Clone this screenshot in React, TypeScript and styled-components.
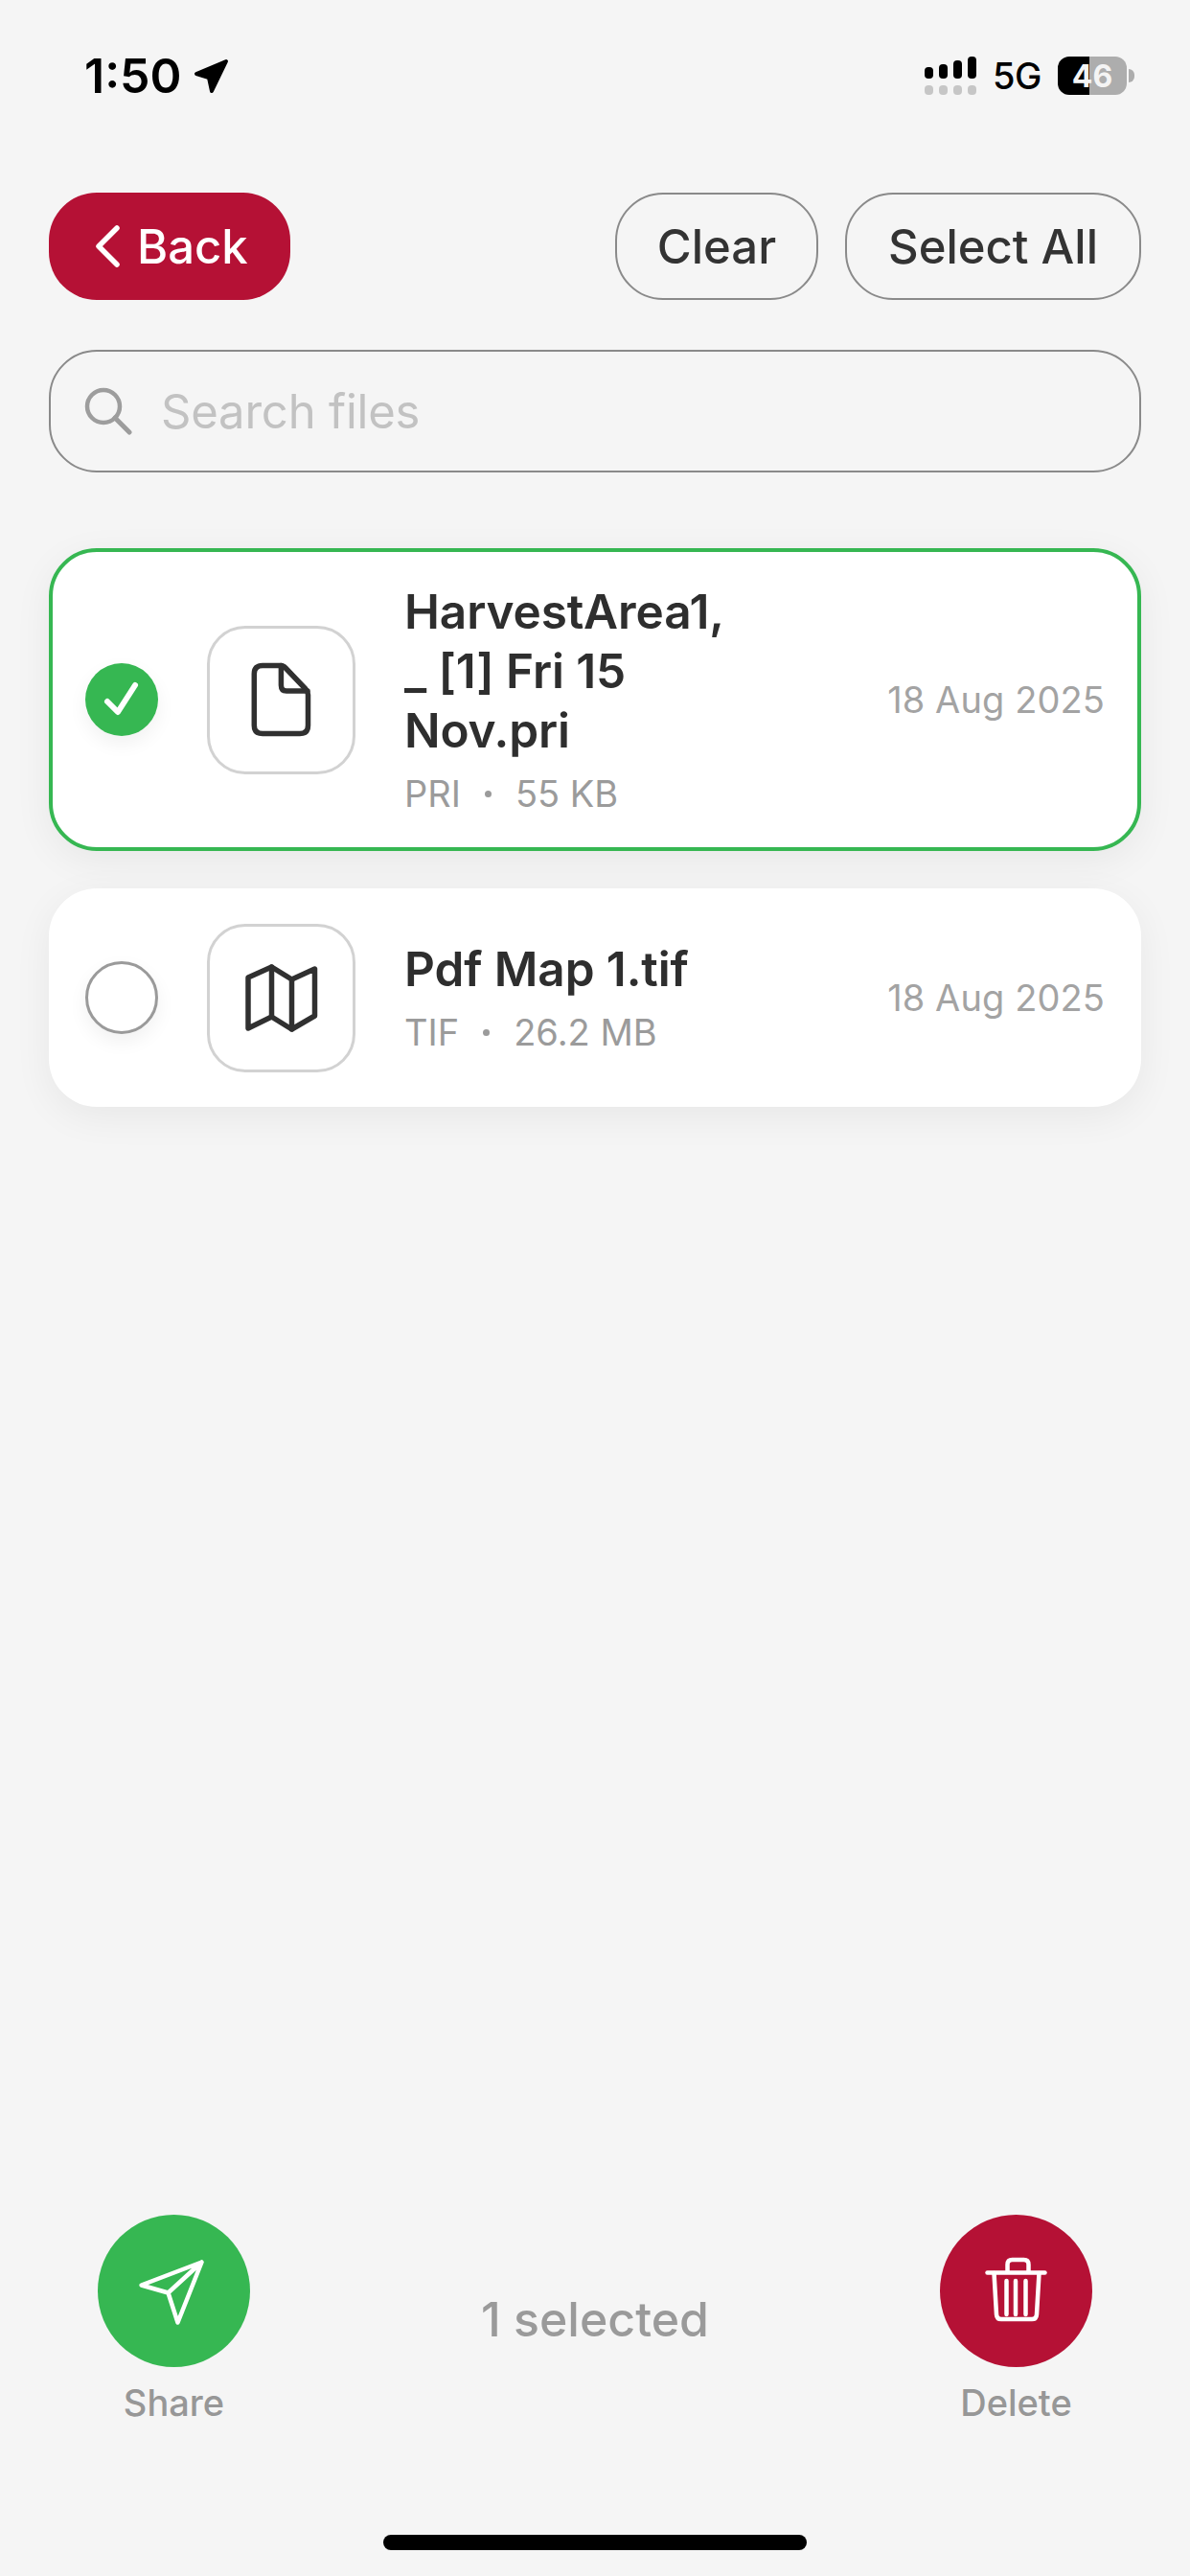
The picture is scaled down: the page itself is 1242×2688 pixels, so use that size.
import React from "react";
import styled, { createGlobalStyle } from "styled-components";

const Global = createGlobalStyle`
  html, body { margin: 0; padding: 0; background: #f5f5f5; }
  * { box-sizing: border-box; }
  body { font-family: Inter, "Noto Sans", "Liberation Sans", sans-serif; }
`;

const RED = "#b51135";
const GREEN = "#36b752";

const Screen = styled.div`
  width: 1242px;
  height: 2688px;
  overflow: hidden;
  background: #f5f5f5;
  display: flex;
  flex-direction: column;
`;

const StatusBar = styled.div`
  height: 58px;
  margin-top: 50px;
  padding: 0 58px 0 88px;
  display: flex;
  align-items: center;
  justify-content: space-between;
`;
const StatusLeft = styled.div`
  display: flex;
  align-items: center;
  gap: 11px;
`;
const Time = styled.span`
  font-size: 50px;
  font-weight: 600;
  color: #000;
`;
const StatusRight = styled.div`
  display: flex;
  align-items: center;
  gap: 17px;
`;
const Net = styled.span`
  font-size: 38px;
  font-weight: 500;
  color: #000;
  letter-spacing: -0.5px;
`;
const BatteryWrap = styled.div`
  display: flex;
  align-items: center;
  gap: 2px;
`;
const Battery = styled.div`
  width: 72px;
  height: 40px;
  border-radius: 12px;
  background: linear-gradient(90deg, #000 0 33px, #adadad 33px 100%);
  color: #f4f4f4;
  font-size: 32px;
  font-weight: 700;
  display: flex;
  align-items: center;
  justify-content: center;
`;
const BatteryTip = styled.div`
  width: 6px;
  height: 14px;
  border-radius: 0 7px 7px 0;
  background: #adadad;
`;

const TopBar = styled.div`
  margin-top: 93px;
  padding: 0 51px;
  display: flex;
  align-items: center;
  justify-content: space-between;
`;
const BackButton = styled.button`
  width: 252px;
  height: 112px;
  border: 0;
  border-radius: 50px;
  background: ${RED};
  color: #fff;
  font: 500 49px Inter, sans-serif;
  display: flex;
  align-items: center;
  gap: 18px;
  padding: 0 0 0 48px;
`;
const TopActions = styled.div`
  display: flex;
  gap: 28px;
`;
const OutlineButton = styled.button<{ $w: number }>`
  width: ${(p) => p.$w}px;
  height: 112px;
  border: 2px solid #8a8a8a;
  border-radius: 50px;
  background: transparent;
  color: #333;
  font: 500 49px Inter, sans-serif;
  padding: 0;
`;

const SearchBox = styled.div`
  margin: 52px 51px 0;
  height: 128px;
  border: 2px solid #8a8a8a;
  border-radius: 50px;
  display: flex;
  align-items: center;
  gap: 30px;
  padding: 0 0 0 35px;
`;
const Placeholder = styled.span`
  font-size: 49px;
  color: #c2c2c2;
  letter-spacing: -0.2px;
`;

const List = styled.div`
  margin: 79px 51px 0;
  display: flex;
  flex-direction: column;
  gap: 39px;
`;
const Card = styled.div<{ $selected?: boolean }>`
  display: flex;
  align-items: center;
  min-height: 228px;
  background: #fff;
  border: 4px solid ${(p) => (p.$selected ? GREEN : "transparent")};
  border-radius: 50px;
  padding: 31px 34px;
  box-shadow: 0 10px 40px rgba(0, 0, 0, 0.06);
`;
const Check = styled.div<{ $on?: boolean }>`
  width: 76px;
  height: 76px;
  border-radius: 50%;
  flex: none;
  background: ${(p) => (p.$on ? GREEN : "#fff")};
  border: ${(p) => (p.$on ? "0" : "3px solid #9a9a9a")};
  display: flex;
  align-items: center;
  justify-content: center;
  box-shadow: 0 8px 20px rgba(0, 0, 0, 0.06);
`;
const IconBox = styled.div`
  width: 155px;
  height: 155px;
  flex: none;
  margin: 0 51px 0 51px;
  border: 3px solid #d2d2d2;
  border-radius: 40px;
  background: #fff;
  display: flex;
  align-items: center;
  justify-content: center;
`;
const Info = styled.div`
  width: 350px;
  flex: none;
`;
const Title = styled.div`
  font-size: 49.5px;
  line-height: 62px;
  font-weight: 600;
  color: #2e2e2e;
  letter-spacing: -0.1px;
`;
const Meta = styled.div`
  display: flex;
  align-items: center;
  gap: 25px;
  font-size: 38px;
  line-height: 50px;
  margin-top: 10px;
  color: #9b9b9b;
`;
const Dot = styled.span`
  width: 7px;
  height: 7px;
  border-radius: 50%;
  background: #9b9b9b;
`;
const DateText = styled.div`
  margin-left: auto;
  font-size: 38px;
  color: #a3a3a3;
  white-space: nowrap;
  letter-spacing: 0.1px;
`;

const BottomBar = styled.div`
  margin-top: auto;
  padding: 0 102px;
  display: flex;
  align-items: center;
  justify-content: space-between;
`;
const Action = styled.div`
  width: 159px;
  display: flex;
  flex-direction: column;
  align-items: center;
  gap: 14px;
`;
const Round = styled.button<{ $bg: string }>`
  width: 159px;
  height: 159px;
  border: 0;
  padding: 0;
  border-radius: 50%;
  background: ${(p) => p.$bg};
  display: flex;
  align-items: center;
  justify-content: center;
`;
const ActionLabel = styled.span`
  font-size: 38px;
  line-height: 46px;
  font-weight: 500;
  color: #979797;
`;
const Selected = styled.span`
  font-size: 50px;
  font-weight: 500;
  color: #9a9a9a;
  padding-bottom: 2px;
`;
const HomeBar = styled.div`
  width: 442px;
  height: 16px;
  border-radius: 8px;
  background: #000;
  margin: 115px auto 27px;
  flex: none;
`;

const SignalIcon = () => (
  <svg width="54" height="40" viewBox="0 0 54 40">
    <g fill="#000">
      <rect x="0" y="11" width="9" height="12" rx="4" />
      <rect x="15" y="8" width="9" height="15" rx="4" />
      <rect x="30" y="4" width="9" height="19" rx="4" />
      <rect x="45" y="0" width="9" height="23" rx="4" />
    </g>
    <g fill="#c6c6c6">
      <rect x="0" y="30" width="9" height="10" rx="4" />
      <rect x="15" y="30" width="9" height="10" rx="4" />
      <rect x="30" y="30" width="9" height="10" rx="4" />
      <rect x="45" y="30" width="9" height="10" rx="4" />
    </g>
  </svg>
);

const LocationArrow = () => (
  <svg width="38" height="37" viewBox="0 0 38 37">
    <path
      d="M35 3 L4 16 L17 20 L20 34 Z"
      fill="#000"
      stroke="#000"
      strokeWidth="4"
      strokeLinejoin="round"
    />
  </svg>
);

const Chevron = () => (
  <svg width="26" height="44" viewBox="0 0 26 44">
    <path
      d="M23 3 L4 22 L23 41"
      fill="none"
      stroke="#fff"
      strokeWidth="5.5"
      strokeLinecap="round"
      strokeLinejoin="round"
    />
  </svg>
);

const SearchIcon = () => (
  <svg width="50" height="50" viewBox="0 0 50 50">
    <circle cx="20" cy="20" r="17" fill="none" stroke="#9d9d9d" strokeWidth="4.5" />
    <path d="M32 32 L47 47" stroke="#9d9d9d" strokeWidth="5" strokeLinecap="round" />
  </svg>
);

const CheckMark = () => (
  <svg width="40" height="40" viewBox="0 0 40 40">
    <path
      d="M5 22 L16 33 L34 5"
      fill="none"
      stroke="#fff"
      strokeWidth="6"
      strokeLinecap="round"
      strokeLinejoin="round"
    />
  </svg>
);

const DocIcon = () => (
  <svg width="63" height="78" viewBox="0 0 63 78">
    <g fill="none" stroke="#303030" strokeWidth="5.5" strokeLinecap="round" strokeLinejoin="round">
      <path d="M12 3.4 H31 Q34 3.4 36 6 L57 28 Q59.5 31 59.5 34 V66 Q59.5 74.5 51 74.5 H12 Q3.3 74.5 3.3 66 V12 Q3.3 3.4 12 3.4 Z" />
      <path d="M31.4 3.4 V24 Q31.4 30 37 30 H59" />
    </g>
  </svg>
);

const FoldedMapIcon = () => (
  <svg width="80" height="76" viewBox="0 0 80 76">
    <g fill="none" stroke="#303030" strokeWidth="5.5" strokeLinecap="round" strokeLinejoin="round">
      <path d="M5 17 L29.5 6 L50.5 19 L74.5 8 V57 L50.5 71 L29.5 58 L5 70 Z" />
      <path d="M29.5 6 V58 M50.5 19 V71" />
    </g>
  </svg>
);

const SendIcon = () => (
  <svg width="80" height="80" viewBox="0 0 80 80">
    <path
      d="M68.5 9.5 L5.5 33.5 L33.5 41.5 L43.5 72.5 Z M68.5 9.5 L33.5 41.5"
      fill="none"
      stroke="#fff"
      strokeWidth="4.5"
      strokeLinecap="round"
      strokeLinejoin="round"
    />
  </svg>
);

const TrashIcon = () => (
  <svg width="80" height="80" viewBox="0 0 80 80">
    <g fill="none" stroke="#fff" strokeWidth="4.5" strokeLinecap="round" strokeLinejoin="round">
      <path d="M10.5 20.5 H70.5" />
      <path d="M31.5 19 V12 Q31.5 7 36.5 7 H48.5 Q53.5 7 53.5 12 V19" />
      <path d="M17.5 21 L20 64 Q20.3 69 25 69 H57 Q61.7 69 62 64 L64.5 21" />
      <path d="M30.5 29 V64 M40 29 V64 M50.5 29 V64" />
    </g>
  </svg>
);

export default function App() {
  return (
    <Screen>
      <Global />
      <StatusBar>
        <StatusLeft>
          <Time>1:50</Time>
          <LocationArrow />
        </StatusLeft>
        <StatusRight>
          <SignalIcon />
          <Net>5G</Net>
          <BatteryWrap>
            <Battery>46</Battery>
            <BatteryTip />
          </BatteryWrap>
        </StatusRight>
      </StatusBar>

      <TopBar>
        <BackButton>
          <Chevron />
          Back
        </BackButton>
        <TopActions>
          <OutlineButton $w={212}>Clear</OutlineButton>
          <OutlineButton $w={309}>Select All</OutlineButton>
        </TopActions>
      </TopBar>

      <SearchBox>
        <SearchIcon />
        <Placeholder>Search files</Placeholder>
      </SearchBox>

      <List>
        <Card $selected>
          <Check $on>
            <CheckMark />
          </Check>
          <IconBox>
            <DocIcon />
          </IconBox>
          <Info>
            <Title>HarvestArea1, _ [1] Fri 15 Nov.pri</Title>
            <Meta>
              <span>PRI</span>
              <Dot />
              <span>55 KB</span>
            </Meta>
          </Info>
          <DateText>18 Aug 2025</DateText>
        </Card>
        <Card>
          <Check />
          <IconBox>
            <FoldedMapIcon />
          </IconBox>
          <Info>
            <Title>Pdf Map 1.tif</Title>
            <Meta>
              <span>TIF</span>
              <Dot />
              <span>26.2 MB</span>
            </Meta>
          </Info>
          <DateText>18 Aug 2025</DateText>
        </Card>
      </List>

      <BottomBar>
        <Action>
          <Round $bg={GREEN} aria-label="Share">
            <SendIcon />
          </Round>
          <ActionLabel>Share</ActionLabel>
        </Action>
        <Selected>1 selected</Selected>
        <Action>
          <Round $bg={RED} aria-label="Delete">
            <TrashIcon />
          </Round>
          <ActionLabel>Delete</ActionLabel>
        </Action>
      </BottomBar>
      <HomeBar />
    </Screen>
  );
}
